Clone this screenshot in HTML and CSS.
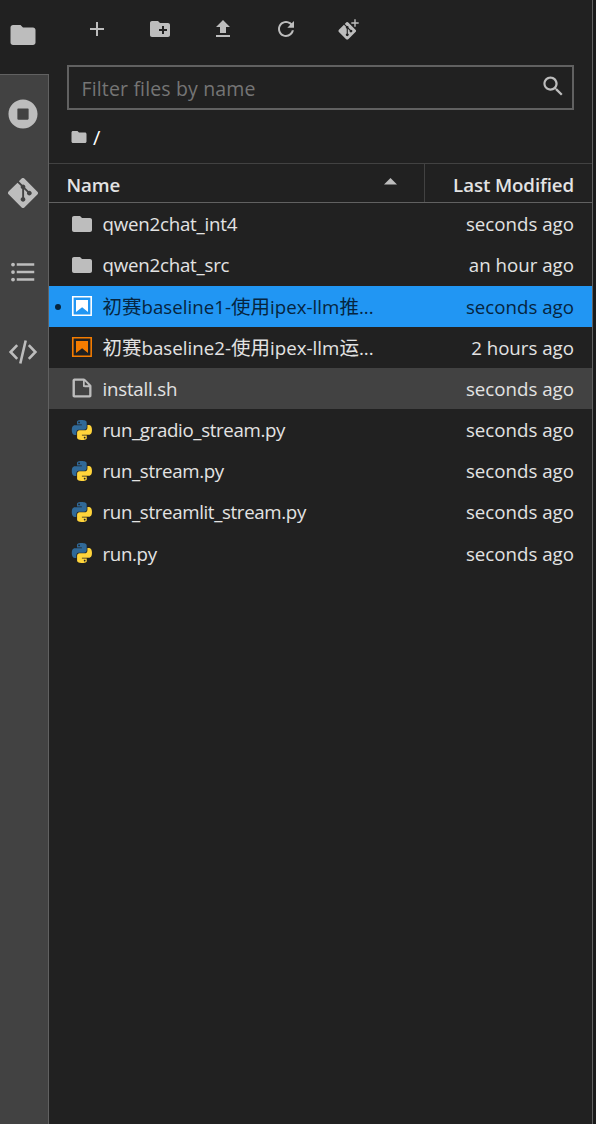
FILE: index.html
```html
<!DOCTYPE html>
<html lang="en">
<head>
<meta charset="utf-8">
<title>File Browser</title>
<link rel="stylesheet" href="styles.css">
</head>
<body>
<svg class="defs" aria-hidden="true">
  <symbol id="folder" viewBox="0 0 24 24"><path d="M10 4H4c-1.1 0-1.99.9-1.99 2L2 18c0 1.1.9 2 2 2h16c1.1 0 2-.9 2-2V8c0-1.1-.9-2-2-2h-8l-2-2z"/></symbol>
  <symbol id="git" viewBox="0 0 92 92"><path d="M90.156 41.965 50.036 1.848a5.918 5.918 0 0 0-8.372 0l-8.328 8.332 10.566 10.566a7.03 7.03 0 0 1 7.23 1.684 7.034 7.034 0 0 1 1.669 7.277l10.187 10.184a7.028 7.028 0 0 1 7.278 1.672 7.04 7.04 0 0 1 0 9.957 7.05 7.05 0 0 1-9.965 0 7.044 7.044 0 0 1-1.528-7.66l-9.5-9.497V59.36a7.04 7.04 0 0 1 1.86 11.29 7.04 7.04 0 0 1-9.957 0 7.04 7.04 0 0 1 0-9.958 7.06 7.06 0 0 1 2.304-1.539V33.926a7.049 7.049 0 0 1-3.82-9.234L29.242 14.272 1.73 41.777a5.925 5.925 0 0 0 0 8.371L41.852 90.27a5.925 5.925 0 0 0 8.37 0l39.934-39.934a5.925 5.925 0 0 0 0-8.371"/></symbol>
  <symbol id="notebook" viewBox="0 0 22 22"><path d="M18.7 3.3v15.4H3.3V3.3h15.4m1.5-1.5H1.8v18.3h18.3l.1-18.3z"/><path d="M16.5 16.5l-5.4-4.3-5.6 4.3v-11h11z"/></symbol>
  <symbol id="file" viewBox="0 0 22 22"><path d="M19.3 8.2l-5.5-5.5c-.3-.3-.7-.5-1.2-.5H3.9c-.8.1-1.6.9-1.6 1.8v14.1c0 .9.7 1.6 1.6 1.6h14.2c.9 0 1.6-.7 1.6-1.6V9.4c.1-.5-.1-.9-.4-1.2zm-5.8-3.3l3.4 3.6h-3.4V4.9zm3.9 12.7H4.7c-.1 0-.2 0-.2-.2V4.7c0-.2.1-.3.2-.3h7.2v4.4s0 .8.3 1.1c.3.3 1.1.3 1.1.3h4.3v7.2s-.1.2-.2.2z"/></symbol>
  <symbol id="python" viewBox="-2.2 -2.4 28.8 28.8">
    <path fill="#306998" d="M14.25.18l.9.2.73.26.59.3.45.32.34.34.25.34.16.33.1.3.04.26.02.2-.01.13V8.5l-.05.63-.13.55-.21.46-.26.38-.3.31-.33.25-.35.19-.35.14-.33.1-.3.07-.26.04-.21.02H8.77l-.69.05-.59.14-.5.22-.41.27-.33.32-.27.35-.2.36-.15.37-.1.35-.07.32-.04.27-.02.21v3.06H3.17l-.21-.03-.28-.07-.32-.12-.35-.18-.36-.26-.36-.36-.35-.46-.32-.59-.28-.73-.21-.88-.14-1.05-.05-1.23.06-1.22.16-1.04.24-.87.32-.71.36-.57.4-.44.42-.33.42-.24.4-.16.36-.1.32-.05.24-.01h.16l.06.01h8.16v-.83H6.18l-.01-2.75-.02-.37.05-.34.11-.31.17-.28.25-.26.31-.23.38-.2.44-.18.51-.15.58-.12.64-.1.71-.06.77-.04.84-.02 1.27.05zm-6.3 1.98l-.23.33-.08.41.08.41.23.34.33.22.41.09.41-.09.33-.22.23-.34.08-.41-.08-.41-.23-.33-.33-.22-.41-.09-.41.09z"/>
    <path fill="#ffd43b" transform="rotate(180 12.05 12)" d="M14.25.18l.9.2.73.26.59.3.45.32.34.34.25.34.16.33.1.3.04.26.02.2-.01.13V8.5l-.05.63-.13.55-.21.46-.26.38-.3.31-.33.25-.35.19-.35.14-.33.1-.3.07-.26.04-.21.02H8.77l-.69.05-.59.14-.5.22-.41.27-.33.32-.27.35-.2.36-.15.37-.1.35-.07.32-.04.27-.02.21v3.06H3.17l-.21-.03-.28-.07-.32-.12-.35-.18-.36-.26-.36-.36-.35-.46-.32-.59-.28-.73-.21-.88-.14-1.05-.05-1.23.06-1.22.16-1.04.24-.87.32-.71.36-.57.4-.44.42-.33.42-.24.4-.16.36-.1.32-.05.24-.01h.16l.06.01h8.16v-.83H6.18l-.01-2.75-.02-.37.05-.34.11-.31.17-.28.25-.26.31-.23.38-.2.44-.18.51-.15.58-.12.64-.1.71-.06.77-.04.84-.02 1.27.05zm-6.3 1.98l-.23.33-.08.41.08.41.23.34.33.22.41.09.41-.09.33-.22.23-.34.08-.41-.08-.41-.23-.33-.33-.22-.41-.09-.41.09z"/>
  </symbol>
</svg>
<div class="app">
  <nav class="sidebar">
    <div class="tab tab-active"><svg><use href="#folder"/></svg></div>
    <div class="tab-rest">
      <div class="tab"><svg viewBox="0 0 512 512"><path d="M256 8C119 8 8 119 8 256s111 248 248 248 248-111 248-248S393 8 256 8zm96 328c0 8.800-7.200 16-16 16H176c-8.800 0-16-7.200-16-16V176c0-8.800 7.200-16 16-16h160c8.800 0 16 7.200 16 16v160z"/></svg></div>
      <div class="tab"><svg><use href="#git"/></svg></div>
      <div class="tab"><svg viewBox="0 0 24 24"><path d="M7 5h14v2H7zM7 11h14v2H7zM7 17h14v2H7z"/><circle cx="4" cy="6" r="1.5"/><circle cx="4" cy="12" r="1.5"/><circle cx="4" cy="18" r="1.5"/></svg></div>
      <div class="tab"><svg viewBox="0 0 30 30"><path class="line" d="M9.200 8.200 2.600 15l6.600 6.800M20.800 8.200l6.600 6.800-6.600 6.800M17.700 3.500l-5.400 23"/></svg></div>
    </div>
  </nav>
  <main class="panel">
    <div class="toolbar">
      <svg viewBox="0 0 24 24"><path d="M19 13h-6v6h-2v-6H5v-2h6V5h2v6h6v2z"/></svg>
      <svg viewBox="0 0 24 24"><path d="M20 6h-8l-2-2H4c-1.110 0-1.990.890-1.990 2L2 18c0 1.110.890 2 2 2h16c1.110 0 2-.890 2-2V8c0-1.110-.890-2-2-2zm-1 8h-3v3h-2v-3h-3v-2h3V9h2v3h3v2z"/></svg>
      <svg viewBox="0 0 24 24"><path d="M9 16h6v-6h4l-7-7-7 7h4zm-4 2h14v2H5z"/></svg>
      <svg viewBox="0 0 18 18"><path d="M9 13.500c-2.490 0-4.500-2.010-4.500-4.500S6.510 4.500 9 4.500c1.240 0 2.360.520 3.170 1.330L10 8h5V3l-1.760 1.760C12.150 3.680 10.660 3 9 3 5.690 3 3.010 5.690 3.010 9S5.690 15 9 15c2.970 0 5.430-2.160 5.900-5h-1.520c-.460 2-2.240 3.500-4.380 3.500z"/></svg>
      <svg viewBox="0 0 24 24"><use href="#git" x="1.300" y="5" width="17.800" height="17.800"/><path d="M17.300 2.300h1.400v3h3v1.400h-3v3h-1.400v-3h-3V5.300h3z"/></svg>
    </div>
    <div class="filter">
      <span>Filter files by name</span>
      <svg viewBox="0 0 18 18"><path d="M12.100,10.900h-0.700l-0.200-0.200c0.800-0.900,1.300-2.200,1.300-3.500c0-3-2.400-5.400-5.400-5.400S1.800,4.200,1.800,7.100s2.400,5.400,5.400,5.400c1.300,0,2.500-0.500,3.500-1.300l0.200,0.200v0.700l4.100,4.100l1.200-1.200L12.100,10.900z M7.100,10.900c-2.100,0-3.700-1.700-3.700-3.700s1.700-3.700,3.700-3.700s3.700,1.700,3.700,3.700S9.200,10.900,7.100,10.900z"/></svg>
    </div>
    <div class="crumbs"><svg><use href="#folder"/></svg><span>/</span></div>
    <div class="header">
      <div class="col-name"><span>Name</span><svg viewBox="0 0 14 7"><path d="M0 7 7 0l7 7z"/></svg></div>
      <div class="col-date">Last Modified</div>
    </div>
    <div class="list">
      <div class="row"><svg><use href="#folder"/></svg><span class="name">qwen2chat_int4</span><span class="date">seconds ago</span></div>
      <div class="row"><svg><use href="#folder"/></svg><span class="name">qwen2chat_src</span><span class="date">an hour ago</span></div>
      <div class="row selected"><i class="dot"></i><svg><use href="#notebook"/></svg><span class="name mixed"><b>初赛</b>baseline1-<b>使用</b>ipex-llm<b>推</b>...</span><span class="date">seconds ago</span></div>
      <div class="row"><svg class="orange"><use href="#notebook"/></svg><span class="name mixed"><b>初赛</b>baseline2-<b>使用</b>ipex-llm<b>运</b>...</span><span class="date">2 hours ago</span></div>
      <div class="row hover"><svg><use href="#file"/></svg><span class="name">install.sh</span><span class="date">seconds ago</span></div>
      <div class="row"><svg><use href="#python"/></svg><span class="name script">run_gradio_stream.py</span><span class="date">seconds ago</span></div>
      <div class="row"><svg><use href="#python"/></svg><span class="name script">run_stream.py</span><span class="date">seconds ago</span></div>
      <div class="row"><svg><use href="#python"/></svg><span class="name script">run_streamlit_stream.py</span><span class="date">seconds ago</span></div>
      <div class="row"><svg><use href="#python"/></svg><span class="name script">run.py</span><span class="date">seconds ago</span></div>
    </div>
  </main>
</div>
</body>
</html>
```
FILE: styles.css
```css
* { box-sizing: border-box; }
body {
  margin: 0;
  background: #1b1b1b;
  color: #e3e3e3;
  font: 18.7px/26px "Open Sans", "Noto Sans CJK SC", sans-serif;
}
svg { display: block; flex: none; fill: #bdbdbd; width: 24px; height: 24px; }
.defs { position: absolute; width: 0; height: 0; }
.app { display: flex; height: 1124px; }
.sidebar { width: 49px; display: flex; flex-direction: column; background: #212121; }
.tab { height: 79.2px; display: flex; align-items: center; padding-left: 8px; }
.tab svg { width: 30px; height: 30px; }
.tab-active { height: 74px; align-items: flex-end; padding-bottom: 24px; }
.tab-rest {
  flex: 1;
  background: #424242;
  border-top: 1px solid #616161;
  border-right: 1px solid #616161;
}
.tab-rest .tab { padding-bottom: 1px; }
.line { fill: none; stroke: #bdbdbd; stroke-width: 2.6; }
.panel {
  width: 544px;
  background: #212121;
  border-right: 1px solid #616161;
  display: flex;
  flex-direction: column;
}
.toolbar { display: flex; gap: 39px; padding: 17px 0 0 36px; height: 65px; }
.filter {
  height: 45px;
  margin: 0 18px;
  border: 2px solid #616161;
  display: flex;
  justify-content: space-between;
  padding: 9px 7px 0 12.500px;
  color: #757575;
  font-size: 19.500px;
  letter-spacing: 0.150px;
}
.filter svg { margin-top: -2px; }
.crumbs { display: flex; align-items: center; height: 53px; padding: 1px 0 0 21px; }
.crumbs svg { width: 18px; height: 18px; }
.crumbs span { margin: 2px 0 0 5px; color: #fff; font-size: 20px; }
.header {
  display: flex;
  height: 40px;
  border-top: 1px solid #424242;
  border-bottom: 1px solid #616161;
  font-weight: 600;
  letter-spacing: -0.100px;
}
.col-name {
  width: 376px;
  border-right: 1px solid #424242;
  display: flex;
  justify-content: space-between;
  align-items: center;
  padding: 4px 27px 0 17.500px;
}
.col-name svg { width: 13px; height: 6.500px; margin-bottom: 7px; }
.col-date { flex: 1; text-align: right; padding: 8px 18px 0 0; }
.row {
  position: relative;
  height: 41.200px;
  display: flex;
  align-items: center;
  padding: 0.500px 18px 0 21px;
}
.list { padding-top: 0.300px; }
.row svg { margin-top: -1px; }
.name { flex: 1; margin-left: 8.500px; white-space: nowrap; letter-spacing: -0.220px; }
.name.mixed { letter-spacing: 0.020px; }
.name.script { letter-spacing: -0.350px; }
.name b { font: 19.500px/26px "Noto Sans CJK SC", sans-serif; letter-spacing: 0; }
.selected { background: #2196f3; color: #06253f; }
.selected svg { fill: #fff; }
.orange { fill: #f57c00; }
.hover { background: #424242; }
.dot { position: absolute; left: 6px; top: 18px; width: 6px; height: 6px; border-radius: 50%; background: #06253f; }
```
